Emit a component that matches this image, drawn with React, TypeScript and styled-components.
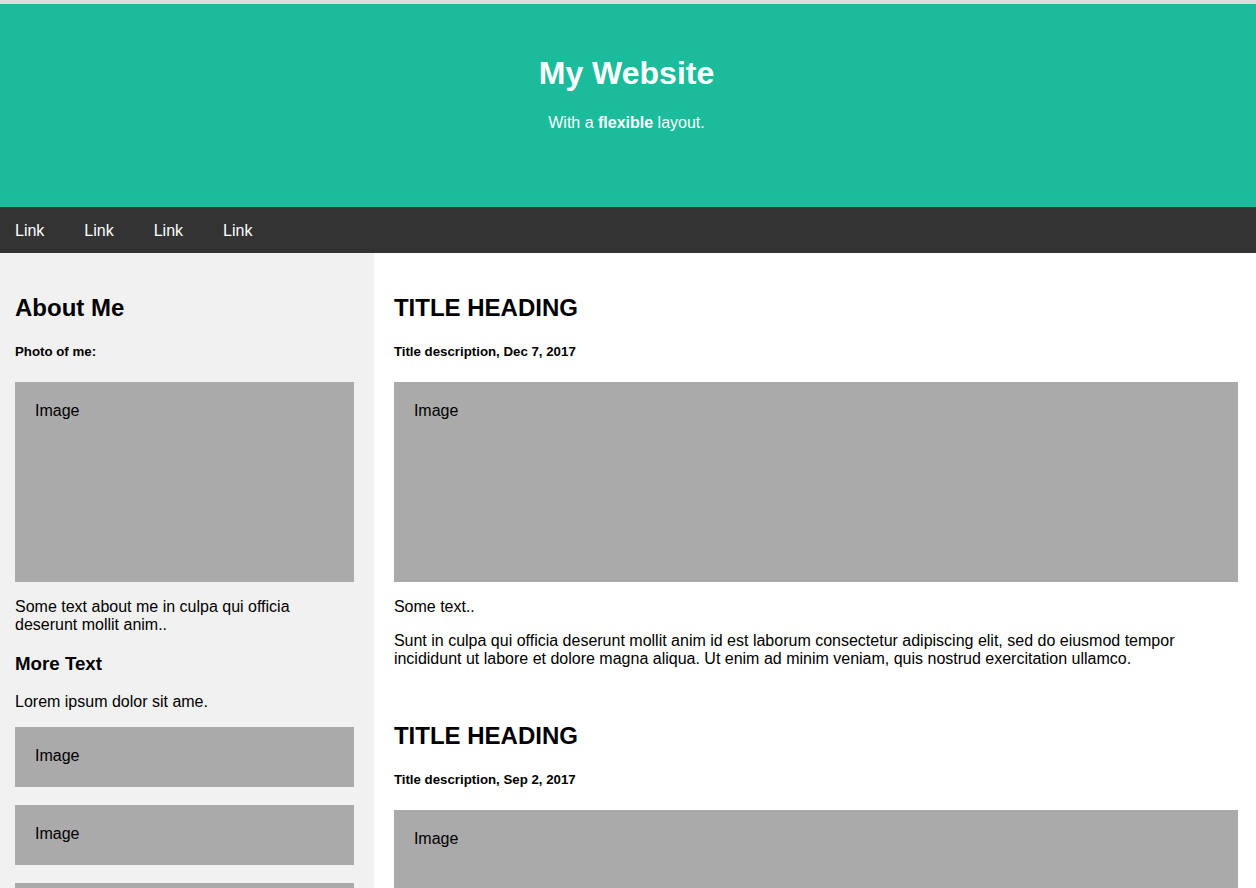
import React from "react";
import styled, { createGlobalStyle } from "styled-components";

const GlobalStyle = createGlobalStyle`
  * { box-sizing: border-box; }
  html, body { margin: 0; padding: 0; overflow: hidden; }
  body {
    background: #dcdcdc;
    font-family: "Liberation Sans", Arial, sans-serif;
    font-size: 16px;
    color: #000;
  }
`;

const Page = styled.div`
  width: 1263px;
  margin: 4px 0 0 -5px;
`;

const Header = styled.header`
  background: #1abc9c;
  color: #fff;
  text-align: center;
  padding: 51px 30px 75px;
`;

const SiteTitle = styled.h1`
  margin: 0 0 22px;
  font-size: 32px;
  line-height: 37px;
  font-weight: bold;
`;

const Tagline = styled.p`
  margin: 0;
  font-size: 16px;
  line-height: 18px;
`;

const Navbar = styled.nav`
  display: flex;
  background: #333;
`;

const NavLink = styled.a`
  display: block;
  color: #fff;
  text-decoration: none;
  padding: 15px 20px 13px;
  font-size: 16px;
  line-height: 18px;
`;

const Row = styled.div`
  display: flex;
`;

const Side = styled.aside`
  flex: 0 0 30%;
  background: #f1f1f1;
  padding: 21px 20px 20px;
`;

const Main = styled.main`
  flex: 1 1 70%;
  background: #fff;
  padding: 21px 20px 20px;
`;

const H2 = styled.h2`
  font-size: 24px;
  line-height: 27.6px;
  margin: 19.92px 0;
  font-weight: bold;
`;

const H3 = styled.h3`
  font-size: 18.72px;
  line-height: 21.5px;
  margin: 18.72px 0;
  font-weight: bold;
`;

const H5 = styled.h5`
  font-size: 13.28px;
  line-height: 16.3px;
  margin: 22.18px 0;
  font-weight: bold;
`;

const P = styled.p`
  margin: 16px 0;
  line-height: 18px;
`;

const FakeImg = styled.div<{ $h: number }>`
  background: #aaa;
  width: 100%;
  padding: 20px;
  height: ${(p) => p.$h}px;
  line-height: 18px;
`;

const Spacer = styled.div`
  height: 18px;
`;

export default function App() {
  return (
    <>
      <GlobalStyle />
      <Page>
        <Header>
          <SiteTitle>My Website</SiteTitle>
          <Tagline>
            With a <b>flexible</b> layout.
          </Tagline>
        </Header>
        <Navbar>
          <NavLink href="#">Link</NavLink>
          <NavLink href="#">Link</NavLink>
          <NavLink href="#">Link</NavLink>
          <NavLink href="#">Link</NavLink>
        </Navbar>
        <Row>
          <Side>
            <H2>About Me</H2>
            <H5>Photo of me:</H5>
            <FakeImg $h={200}>Image</FakeImg>
            <P>Some text about me in culpa qui officia deserunt mollit anim..</P>
            <H3>More Text</H3>
            <P>Lorem ipsum dolor sit ame.</P>
            <FakeImg $h={60}>Image</FakeImg>
            <Spacer />
            <FakeImg $h={60}>Image</FakeImg>
            <Spacer />
            <FakeImg $h={60}>Image</FakeImg>
          </Side>
          <Main>
            <H2>TITLE HEADING</H2>
            <H5>Title description, Dec 7, 2017</H5>
            <FakeImg $h={200}>Image</FakeImg>
            <P>Some text..</P>
            <P>
              Sunt in culpa qui officia deserunt mollit anim id est laborum consectetur adipiscing elit, sed do
              eiusmod tempor incididunt ut labore et dolore magna aliqua. Ut enim ad minim veniam, quis nostrud
              exercitation ullamco.
            </P>
            <Spacer />
            <H2>TITLE HEADING</H2>
            <H5>Title description, Sep 2, 2017</H5>
            <FakeImg $h={200}>Image</FakeImg>
            <P>Some text..</P>
            <P>
              Sunt in culpa qui officia deserunt mollit anim id est laborum consectetur adipiscing elit, sed do
              eiusmod tempor incididunt ut labore et dolore magna aliqua. Ut enim ad minim veniam, quis nostrud
              exercitation ullamco.
            </P>
          </Main>
        </Row>
      </Page>
    </>
  );
}
